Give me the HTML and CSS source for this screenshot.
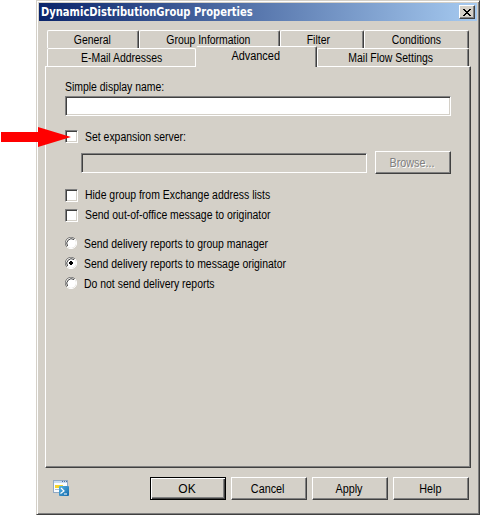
FILE: index.html
```html
<!DOCTYPE html>
<html lang="en">
<head>
<meta charset="utf-8">
<title>DynamicDistributionGroup Properties</title>
<link rel="stylesheet" href="styles.css">
</head>
<body>
<main class="window">
  <header class="titlebar">
    <h1>DynamicDistributionGroup Properties</h1>
    <button class="close" aria-label="Close"><svg width="8" height="7" viewBox="0 0 8 7" shape-rendering="crispEdges"><path d="M0 0h2v1h1v1h2V1h1V0h2v1H7v1H6v1H5v1h1v1h1v1h1v1H6V6H5V5H3v1H2v1H0V6h1V5h1V4h1V3H2V2H1V1H0z"/></svg></button>
  </header>
  <nav class="tabs">
    <div class="tabrow back">
      <div class="tab general"><span>General</span></div>
      <div class="tab info"><span>Group Information</span></div>
      <div class="tab filter"><span>Filter</span></div>
      <div class="tab conditions"><span>Conditions</span></div>
    </div>
    <div class="tabrow front">
      <div class="tab email"><span>E-Mail Addresses</span></div>
      <div class="tab active"><span>Advanced</span></div>
      <div class="tab mail"><span>Mail Flow Settings</span></div>
    </div>
  </nav>
  <section class="panel">
    <label class="caption"><span>Simple display name:</span></label>
    <div class="field name"></div>
    <div class="option expansion"><i class="check"></i><span>Set expansion server:</span></div>
    <div class="server"><div class="field disabled"></div><button class="btn browse" disabled><span>Browse...</span></button></div>
    <div class="option hide"><i class="check"></i><span>Hide group from Exchange address lists</span></div>
    <div class="option office"><i class="check"></i><span>Send out-of-office message to originator</span></div>
    <div class="option choice radios"><svg class="radio"><use href="#radio"/></svg><span>Send delivery reports to group manager</span></div>
    <div class="option choice"><svg class="radio"><use href="#radio"/><path d="M5 4h2v1h1v2H7v1H5V7H4V5h1z"/></svg><span>Send delivery reports to message originator</span></div>
    <div class="option choice"><svg class="radio"><use href="#radio"/></svg><span>Do not send delivery reports</span></div>
  </section>
  <footer class="actions">
    <svg class="shell" width="17" height="17" viewBox="0 0 17 17">
      <defs><linearGradient id="blue" x2="1" y2="1"><stop stop-color="#58b5e6"/><stop offset="1" stop-color="#1267a8"/></linearGradient></defs>
      <rect x=".5" y=".5" width="14" height="12" fill="#fafcff" stroke="#91a9c4"/>
      <path d="M1 1h13v2H1z" fill="#c9dcf2"/><path d="M9 1h1v1H9zM11 1h1v1h-1zM13 1h1v1h-1z" fill="#526e96"/>
      <path d="M2 5h8v3H2z" fill="#f6d42c"/><path d="M2 9h4v1H2z" fill="#aebed0"/>
      <rect x="6" y="6" width="10" height="10" rx="1" fill="url(#blue)"/>
      <path d="M8 8l3 3-3.5 2.5M11 14h3" fill="none" stroke="#fff" stroke-width="1.2"/>
    </svg>
    <button class="btn ok"><span>OK</span></button>
    <button class="btn"><span>Cancel</span></button>
    <button class="btn"><span>Apply</span></button>
    <button class="btn"><span>Help</span></button>
  </footer>
</main>
<svg class="arrow" width="72" height="22" viewBox="0 0 72 22"><path d="M1 6h37V1l33 10-33 10v-5H1z" fill="#f00"/></svg>
<svg width="0" height="0" class="defs"><defs><g id="radio"><circle cx="6" cy="6" r="5" fill="#fff"/><path d="M1.9 10A5.6 5.6 0 0 1 10 1.9" fill="none" stroke="#808080"/><path d="M2.6 9A4.6 4.6 0 0 1 9 2.6" fill="none" stroke="#404040"/><path d="M2 10A5.6 5.6 0 0 0 10 2" fill="none" stroke="#fff"/></g></defs></svg>
</body>
</html>
```
FILE: styles.css
```css
* { box-sizing: border-box; }
body { margin: 0; width: 480px; height: 515px; overflow: hidden; background: #fff; font: 12px/14px "Liberation Sans", Arial, sans-serif; color: #000; position: relative; }
span { display: block; white-space: nowrap; transform: scaleX(.87); }
.window { margin-left: 36px; width: 444px; height: 515px; background: #d4d0c8; border: 1px solid #d4d0c8; border-right-color: #404040; border-bottom-color: #404040; box-shadow: inset 1px 1px #fff, inset -1px -1px #808080; padding: 2px; }
.titlebar { height: 18px; display: flex; align-items: center; justify-content: space-between; padding: 0 2px; background: linear-gradient(90deg, #0a246a, #a6caf0); }
h1 { margin: 0; font: bold 11.5px/16px "DejaVu Sans Condensed", "DejaVu Sans", sans-serif; font-stretch: condensed; color: #fff; transform: scaleX(.963); transform-origin: left; }
.close { width: 16px; height: 14px; padding: 0; border: 1px solid #fff; border-right-color: #404040; border-bottom-color: #404040; box-shadow: inset -1px -1px #808080; background: #d4d0c8; display: grid; place-items: center; }
.tabs { margin-top: 9px; padding-left: 8px; }
.tabrow { display: flex; }
.back { height: 18px; }
.front { height: 18px; align-items: flex-end; }
.tab { height: 18px; border: 1px solid #fff; border-bottom: 0; border-right-color: #404040; border-radius: 2px 2px 0 0; box-shadow: inset -1px 0 #808080; display: flex; justify-content: center; padding-top: 2px; background: #d4d0c8; }
.general { width: 92px; padding-right: 2px; }
.info { width: 141px; padding-right: 2px; }
.filter { width: 84px; padding-right: 8px; }
.conditions { width: 105px; padding-right: 1px; }
.email { width: 149px; box-shadow: none; border-right-color: #fff; }
.active { width: 121px; height: 21px; margin-bottom: -1px; padding-right: 2px; border-left-color: #d4d0c8; }
.active span { transform: scaleX(.91); }
.mail { width: 152px; padding-right: 4px; }
.panel { margin-left: 6px; width: 426px; height: 402px; border: 1px solid #fff; border-right-color: #404040; border-bottom-color: #404040; box-shadow: inset -1px -1px #808080; padding: 13px 19px 0; }
.caption { display: block; }
.caption span, .option span { transform-origin: left; }
.field { border: 1px solid #808080; border-right-color: #fff; border-bottom-color: #fff; box-shadow: inset 1px 1px #404040, inset -1px -1px #d4d0c8; background: #fff; }
.name { margin-top: 2px; width: 386px; height: 20px; }
.option { display: flex; align-items: center; height: 20px; gap: 7px; }
.expansion span, .choice span { padding-top: 2px; }
.check { width: 13px; height: 13px; border: 1px solid #808080; border-right-color: #fff; border-bottom-color: #fff; box-shadow: inset 1px 1px #404040, inset -1px -1px #d4d0c8; background: #fff; }
.expansion { margin-top: 10px; }
.server { display: flex; margin: 5px 0 0 16px; gap: 8px; height: 23px; align-items: center; }
.disabled { width: 286px; height: 20px; background: #d4d0c8; }
.btn { width: 76px; height: 23px; padding: 0 2px 0 0; display: grid; place-items: center; font: inherit; color: #000; background: #d4d0c8; border: 1px solid #fff; border-right-color: #404040; border-bottom-color: #404040; box-shadow: inset -1px -1px #808080; }
.btn span { transform: scaleX(.9); }
.ok span { transform: none; }
.browse { color: #808080; text-shadow: 1px 1px #fff; }
.hide { margin-top: 11px; }
.radios { margin-top: 8px; }
.radio { width: 12px; height: 12px; }
.actions { display: flex; align-items: center; margin-top: 9px; padding-left: 14px; gap: 5px; height: 23px; }
.shell { margin-right: 75px; }
.ok { border-color: #000; box-shadow: inset 1px 1px #fff, inset -1px -1px #404040, inset -2px -2px #808080; }
.arrow { position: absolute; left: 0; top: 126px; }
.defs { position: absolute; }
```
